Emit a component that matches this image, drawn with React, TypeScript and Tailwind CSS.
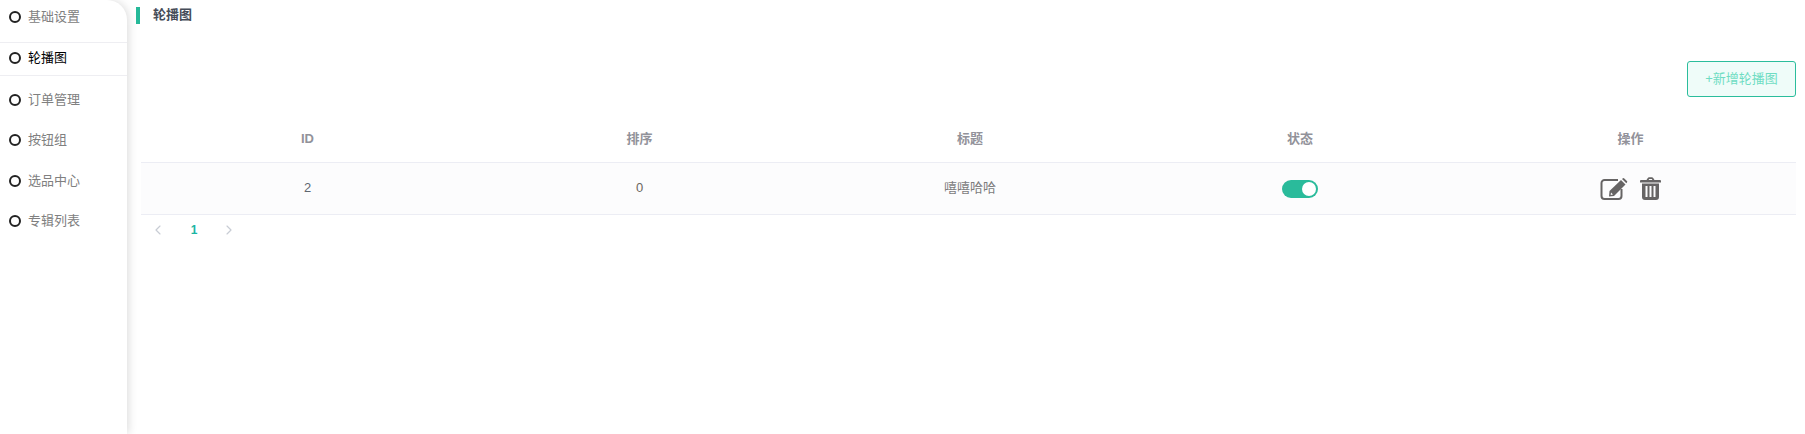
import { ChevronLeft, ChevronRight } from 'lucide-react'

const FONT = "font-['Liberation_Sans','Noto_Sans_CJK_SC',sans-serif]"
const GRID = 'grid grid-cols-[333px_331px_330px_330px_331px]'

const MENU = [
  { label: '基础设置', h: 'h-[42px]', pt: 'pt-[8px]' },
  { label: '轮播图', h: 'h-[34px]', pt: 'pt-[6px]', active: true },
  { label: '订单管理', h: 'h-[41px]', pt: 'pt-[15px]' },
  { label: '按钮组', h: 'h-[41px]', pt: 'pt-[14px]' },
  { label: '选品中心', h: 'h-[40px]', pt: 'pt-[14px]' },
  { label: '专辑列表', h: 'h-[40px]', pt: 'pt-[14px]' },
]

const COLS = ['ID', '排序', '标题', '状态', '操作']

function EditIcon() {
  return (
    <svg width="28" height="23" viewBox="0 0 28 23" fill="none">
      <path
        d="M18 3H4.5A3 3 0 0 0 1.5 6v13a3 3 0 0 0 3 3h14a3 3 0 0 0 3-3v-7"
        stroke="currentColor"
        strokeWidth="2"
      />
      <path d="M9.5 14 21 3l4.5 4.5L14 19l-5 .6z" fill="currentColor" />
      <path d="M22.6 1.4a1.2 1.2 0 0 1 1.7 0l2.6 2.5a1.2 1.2 0 0 1 0 1.7l-.6.6-4.3-4.2z" fill="currentColor" />
      <path d="M11 15.5l2 2-2.3.4z" fill="#fcfcfd" />
    </svg>
  )
}

function TrashIcon() {
  return (
    <svg width="21" height="23" viewBox="0 0 21 23">
      <path
        fillRule="evenodd"
        fill="currentColor"
        d="M6.5 3 7.6 1.2A2 2 0 0 1 9.2.3h2.6a2 2 0 0 1 1.6.9L14.5 3H20a1 1 0 0 1 1 1v1.5H0V4a1 1 0 0 1 1-1zM8.6 3h3.8l-.6-1H9.2zM2 6.5h17V20a3 3 0 0 1-3 3H5a3 3 0 0 1-3-3zM5.5 9v11h2V9zM9.5 9v11h2V9zM13.5 9v11h2V9z"
      />
    </svg>
  )
}

function Sidebar() {
  return (
    <aside className="w-[127px] h-full shrink-0 bg-white rounded-tr-[20px] shadow-[2px_0_8px_rgba(0,0,0,0.13)]">
      {MENU.map((m) => (
        <div
          key={m.label}
          className={`${m.h} ${m.pt} box-border flex items-start pl-[9px] gap-[7px] text-[13px] leading-[18px] ${
            m.active ? 'text-black border-y border-[#eeeef2]' : 'text-[#808080]'
          }`}
        >
          <span className="mt-[3px] w-[12px] h-[12px] rounded-full border-2 border-[#222] box-border" />
          <span>{m.label}</span>
        </div>
      ))}
    </aside>
  )
}

export default function App() {
  return (
    <div className={`${FONT} flex w-[1805px] h-[434px] bg-white overflow-hidden`}>
      <Sidebar />
      <main className="flex-1 pl-[9px] pt-[7px]">
        {/* 标题 */}
        <div className="h-[17px] flex items-center border-l-4 border-[#26b999] pl-[13px] pb-[2px] text-[13px] font-bold text-[#454c58]">
          轮播图
        </div>

        <div className="flex justify-end pr-[9px] mt-[37px]">
          <button className="w-[109px] h-[36px] rounded-[3px] border border-[#2bbd9c] bg-[#effcf9] text-[13px] text-[#6fdcc3]">
            +新增轮播图
          </button>
        </div>

        {/* 表格 */}
        <div className="ml-[5px] mr-[9px] mt-[3px]">
          <div className={`${GRID} h-[63px] items-center text-center text-[13px] font-bold text-[#92929a] border-b border-[#ecedf4] pt-[16px]`}>
            {COLS.map((c) => (
              <div key={c}>{c}</div>
            ))}
          </div>
          <div className={`${GRID} h-[52px] items-center text-center text-[13px] text-[#7d7d7d] bg-[#fcfcfd] border-b border-[#ecedf4] pb-[2px]`}>
            <div className="text-[#5f6670]">2</div>
            <div className="text-[#6b6660]">0</div>
            <div>嘻嘻哈哈</div>
            <div className="flex justify-center pt-[2px]">
              <span className="w-[36px] h-[18px] rounded-full bg-[#2abb9b] flex items-center justify-end pr-[2px]">
                <span className="w-[14px] h-[14px] rounded-full bg-white" />
              </span>
            </div>
            <div className="flex justify-center items-center gap-[12px] text-[#666464] pt-[1px]">
              <EditIcon />
              <TrashIcon />
            </div>
          </div>

          {/* 分页 */}
          <div className="flex items-center h-[28px] pt-[2px] text-[12px] font-bold">
            <ChevronLeft size={16} strokeWidth={1.75} className="ml-[9px] text-[#c8ccd4]" />
            <span className="ml-[24px] w-[8px] text-center text-[#1cb5a3]">1</span>
            <ChevronRight size={16} strokeWidth={1.75} className="ml-[23px] text-[#c8ccd4]" />
          </div>
        </div>
      </main>
    </div>
  )
}
